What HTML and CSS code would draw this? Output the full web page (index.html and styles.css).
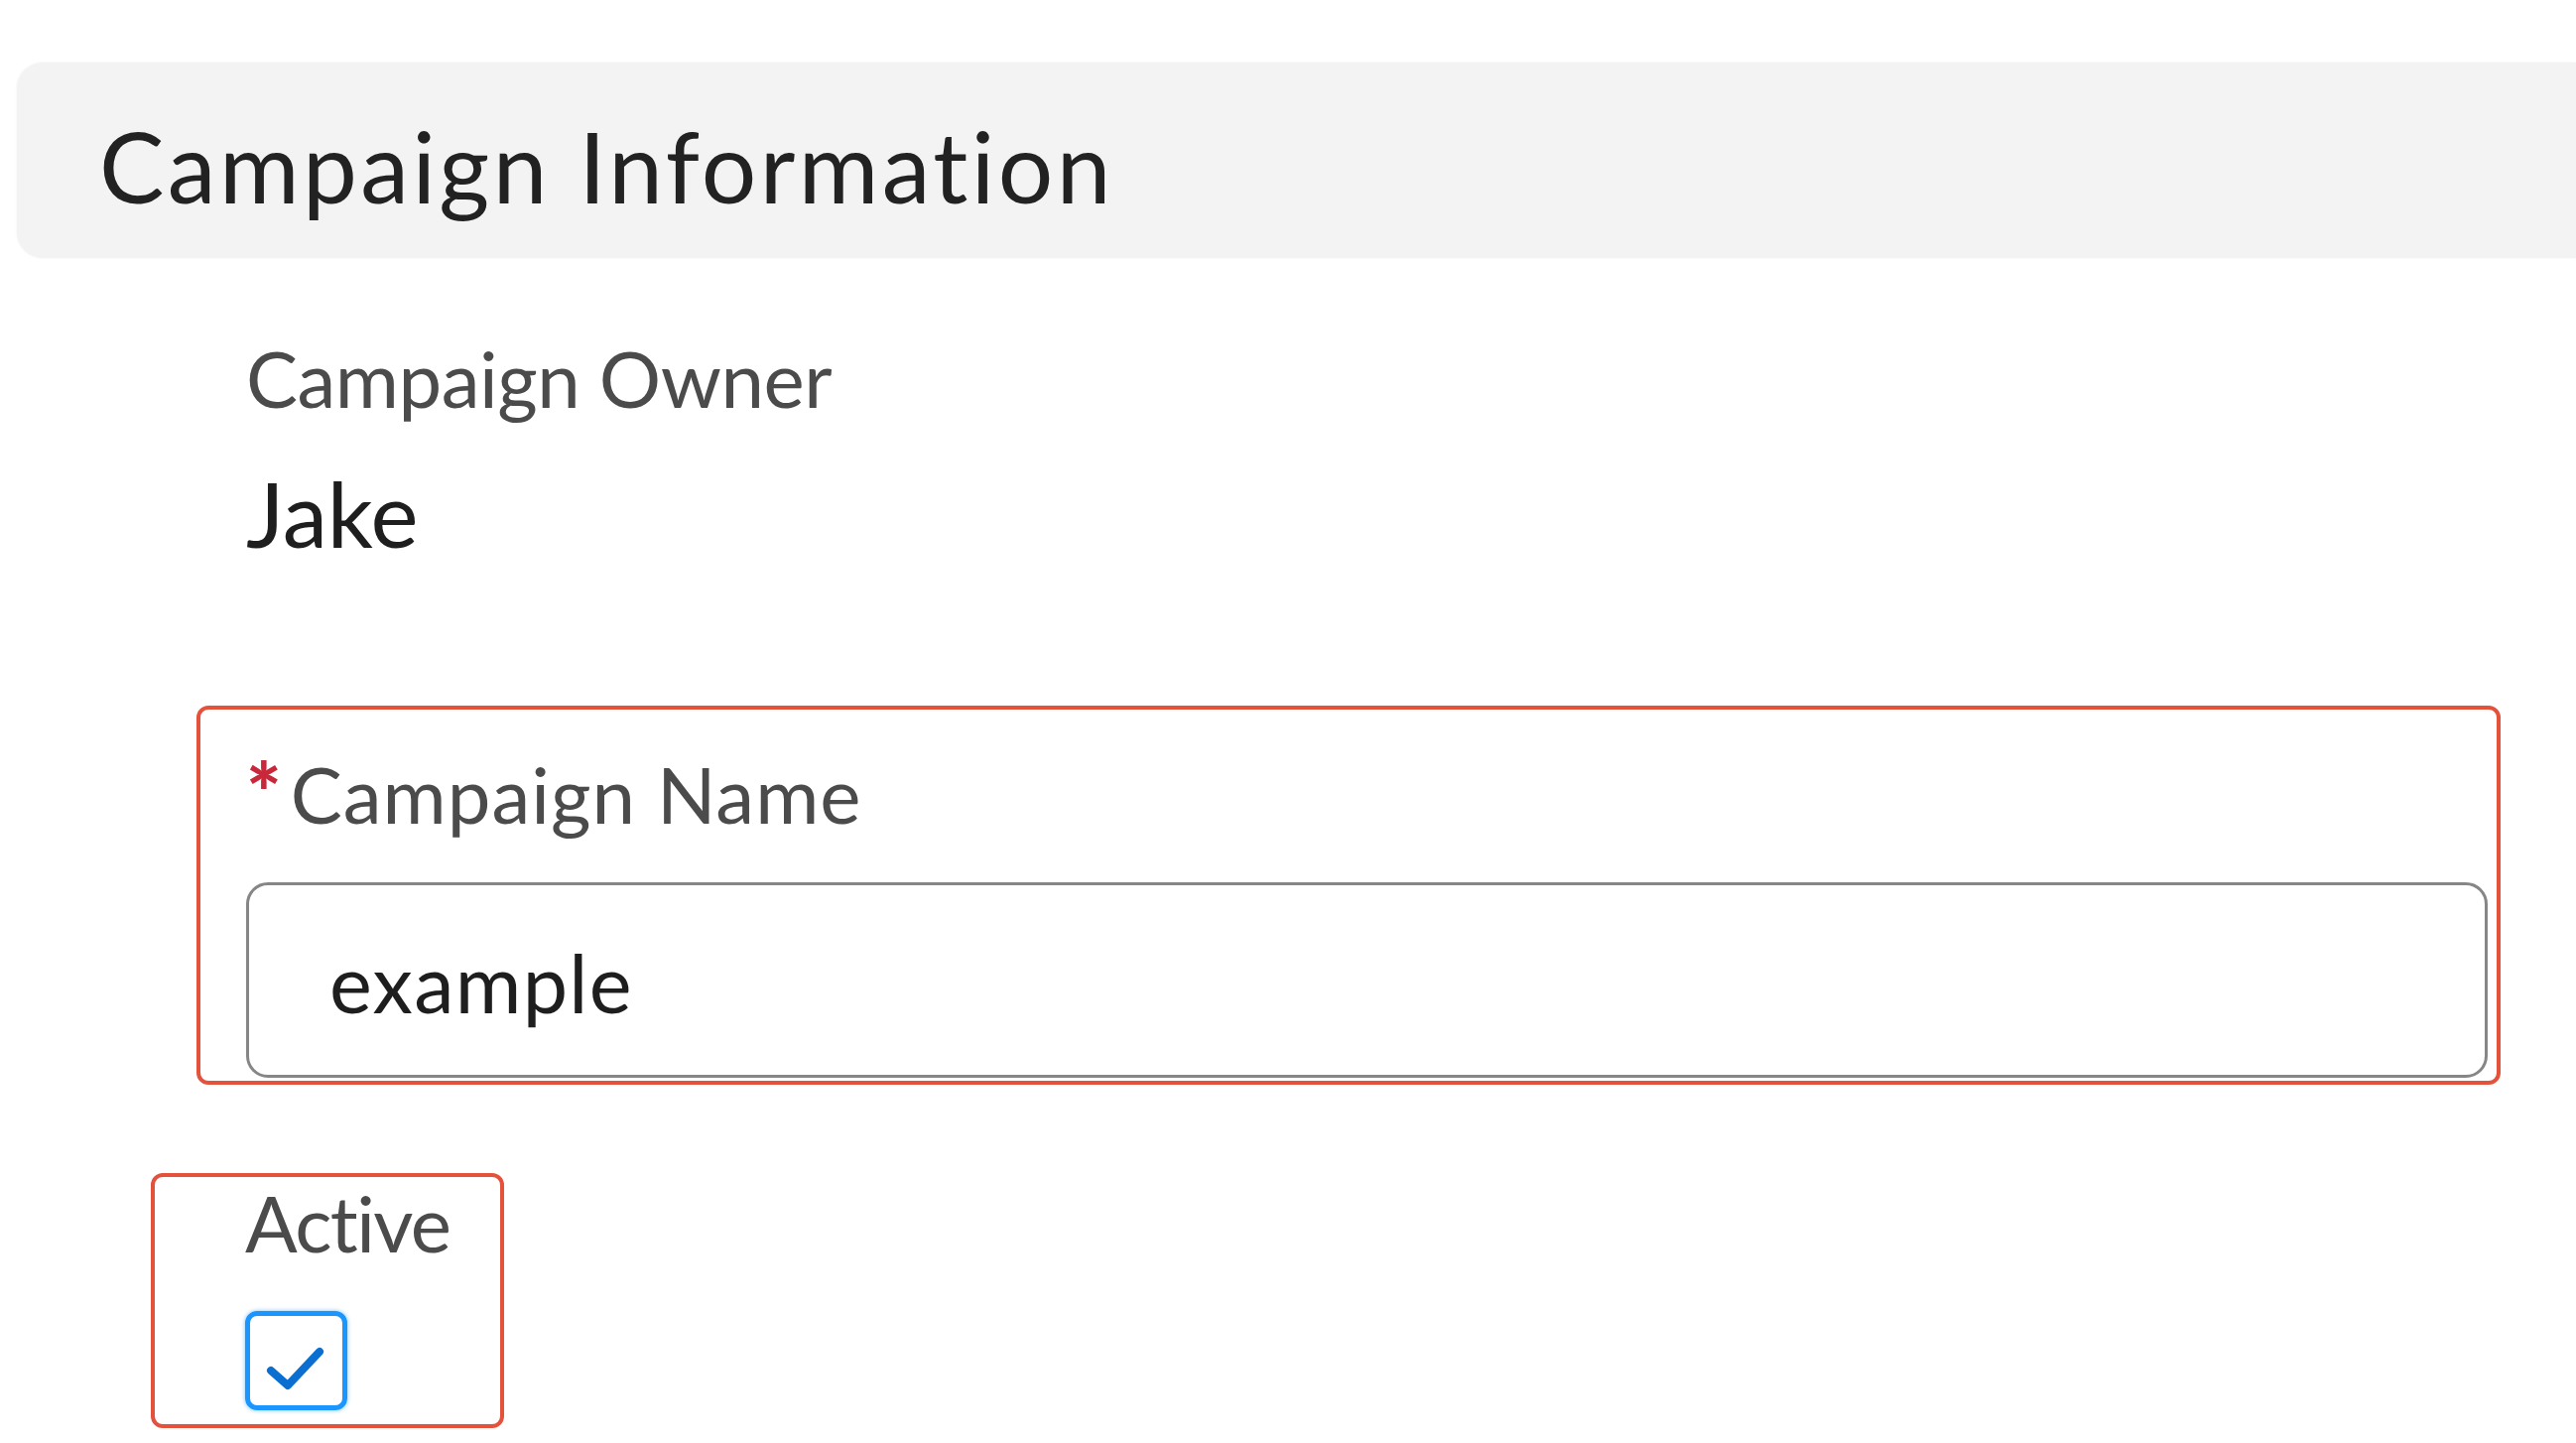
FILE: index.html
```html
<!DOCTYPE html>
<html lang="en">
<head>
<meta charset="utf-8">
<title>Campaign Information</title>
<link rel="stylesheet" href="styles.css">
</head>
<body>
<section class="section">
  <header class="section-header">
    <h2 class="section-title">Campaign Information</h2>
  </header>
  <div class="section-body">
    <div class="field-owner">
      <span class="field-label">Campaign Owner</span>
      <span class="field-value">Jake</span>
    </div>
    <div class="highlight highlight-name">
      <label class="field-label field-label-required"><abbr class="required" title="required">*</abbr>Campaign Name</label>
      <div class="text-input">example</div>
    </div>
    <div class="highlight highlight-active">
      <span class="field-label field-label-active">Active</span>
      <span class="checkbox">
        <svg class="checkmark" viewBox="0 0 100 100" width="100" height="100" aria-hidden="true">
          <polyline points="26,60 43,75 75,41" fill="none" stroke="#0b6fd1" stroke-width="8" stroke-linecap="round" stroke-linejoin="round"/>
        </svg>
      </span>
    </div>
  </div>
</section>
</body>
</html>
```
FILE: styles.css
```css
* { box-sizing: border-box; }
html, body { margin: 0; background: #ffffff; }
body {
  font-family: Lato, "Open Sans", sans-serif;
  color: #1e1e1e;
  font-variant-ligatures: none;
  font-feature-settings: "liga" 0, "clig" 0;
}

.section { padding-top: 63px; }

.section-header {
  margin-left: 17px;
  height: 197px;
  background: #f3f3f3;
  border-radius: 26px 0 0 26px;
  padding: 55px 0 0 83px;
  box-shadow: 0 0 3px rgba(0, 0, 0, 0.05);
}
.section-title {
  margin: 0;
  font-weight: 400;
  font-size: 98px;
  line-height: 1;
  letter-spacing: 3.4px;
  color: #222222;
}

.section-body { padding-top: 82px; }

.field-owner {
  margin-left: 248px;
  display: flex;
  flex-direction: column;
  gap: 51px;
}
.field-label {
  font-size: 78px;
  line-height: 1;
  letter-spacing: -0.5px;
  color: #4b4b4b;
}
.field-label-required {
  display: block;
  height: 78px;
  letter-spacing: 1px;
}
.field-label-active {
  letter-spacing: -1.6px;
}
.field-value {
  font-size: 91px;
  line-height: 1;
  color: #1e1e1e;
}

.highlight {
  border: 4px solid #e4523c;
  border-radius: 12px;
}
.highlight-name {
  margin: 149px 0 0 198px;
  width: 2322px;
  height: 382px;
  padding: 46px 9px 0 46px;
  display: flex;
  flex-direction: column;
  gap: 50px;
}
.required {
  color: #c9283b;
  text-decoration: none;
  border: 0;
  font-weight: 900;
  font-size: 84px;
  line-height: 0;
  margin-right: 8px;
}
.text-input {
  height: 197px;
  border: 3px solid #868686;
  border-radius: 22px;
  padding: 4px 0 0 81px;
  display: flex;
  align-items: center;
  font-size: 81px;
  line-height: 1;
  letter-spacing: 1.3px;
  color: #1e1e1e;
}

.highlight-active {
  margin: 89px 0 0 152px;
  width: 356px;
  height: 257px;
  padding: 7px 0 0 91px;
  display: flex;
  flex-direction: column;
  align-items: flex-start;
  gap: 50px;
}
.checkbox {
  width: 103px;
  height: 100px;
  border: 5px solid #1b96ff;
  border-radius: 12px;
  box-shadow: 0 0 4px rgba(27, 150, 255, 0.6);
  display: block;
  position: relative;
}
.checkmark {
  position: absolute;
  left: -5px;
  top: -5px;
}
```
